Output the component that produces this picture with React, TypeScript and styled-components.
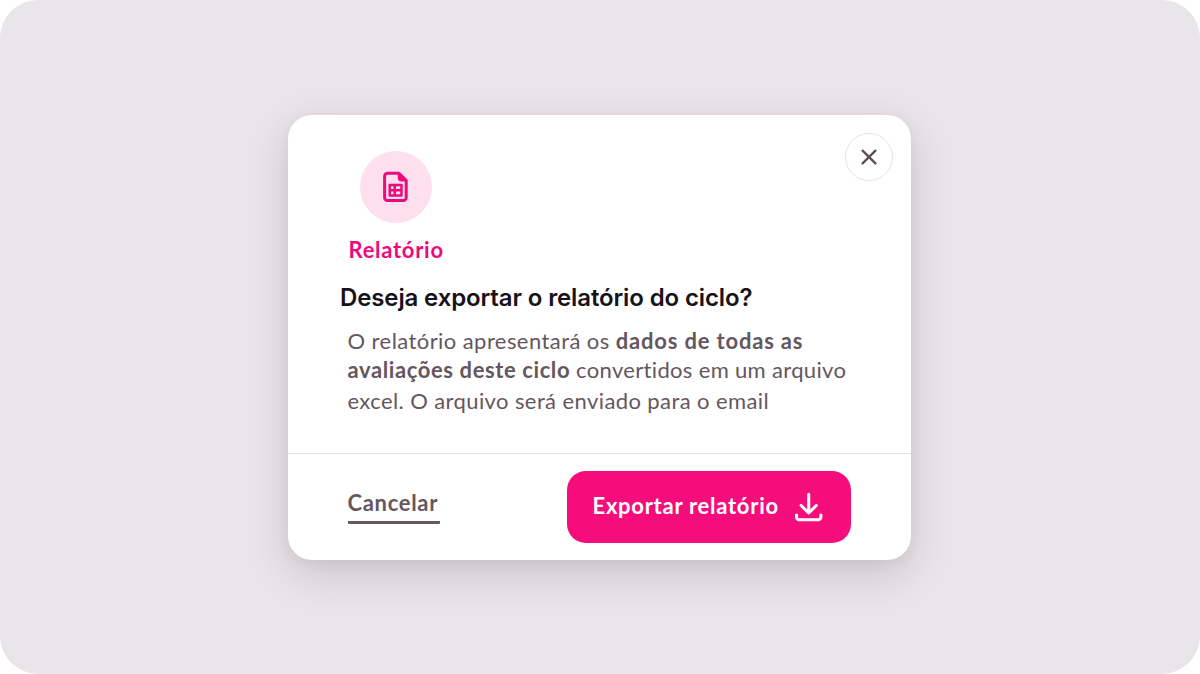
import React from "react";
import styled, { createGlobalStyle } from "styled-components";

const GlobalStyle = createGlobalStyle`
  * { box-sizing: border-box; }
  body { margin: 0; background: #fff; }
  button { font: inherit; border: 0; padding: 0; cursor: pointer; }
`;

const Stage = styled.main`
  width: 1200px;
  height: 674px;
  padding: 114.5px 0 0 287.5px;
  border-radius: 38px;
  background: #eae5e9;
  font-family: Lato, "Open Sans", sans-serif;
  overflow: hidden;
`;

const Dialog = styled.section`
  width: 623.5px;
  height: 445.5px;
  display: flex;
  flex-direction: column;
  border-radius: 24px;
  background: #fff;
  box-shadow: 0 14px 40px rgba(60, 40, 50, 0.17), 0 4px 16px rgba(60, 40, 50, 0.05);
`;

const Body = styled.div`
  height: 339px;
  display: flex;
  justify-content: space-between;
  align-items: flex-start;
  padding: 36px 18px 0 52px;
  border-bottom: 1.5px solid #e6e2e5;
`;

const Content = styled.div`
  flex: 1;
  min-width: 0;
  display: flex;
  flex-direction: column;
  align-items: flex-start;
`;

const Badge = styled.div`
  width: 72px;
  height: 72px;
  margin-left: 20.5px;
  display: grid;
  place-items: center;
  border-radius: 50%;
  background: #fddfee;
`;

const Category = styled.div`
  margin: 12px 0 0 9px;
  font-size: 22px;
  line-height: 30px;
  font-weight: 700;
  letter-spacing: 0.72px;
  color: #ea0b7c;
`;

const Title = styled.h1`
  margin: 18px 0 0 0.5px;
  font-family: Inter, sans-serif;
  font-size: 24px;
  line-height: 30px;
  font-weight: 600;
  letter-spacing: -0.13px;
  color: #18121a;
  white-space: nowrap;
`;

const Message = styled.p`
  margin: 13px 0 0 8px;
  font-size: 22px;
  color: #655660;
`;

const Line = styled.span<{ $height: number; $spacing: number }>`
  display: block;
  height: ${(p) => p.$height}px;
  line-height: 30px;
  letter-spacing: ${(p) => p.$spacing}px;
  white-space: nowrap;
`;

const Strong = styled.strong<{ $spacing: number }>`
  font-weight: 700;
  letter-spacing: ${(p) => p.$spacing}px;
`;

const CloseButton = styled.button`
  flex: none;
  width: 48px;
  height: 48px;
  margin-top: -18px;
  display: grid;
  place-items: center;
  border: 1.5px solid #e6e3e6;
  border-radius: 50%;
  background: #fff;
  color: #5c4e57;
`;

const Footer = styled.footer`
  flex: 1;
  display: flex;
  align-items: flex-start;
  justify-content: space-between;
  padding: 17px 60px 0 60px;
`;

const CancelButton = styled.button`
  width: 92px;
  height: 37px;
  margin-top: 16px;
  padding-bottom: 2px;
  border-bottom: 3px solid #655660;
  border-radius: 1.5px;
  background: none;
  font-size: 22px;
  line-height: 30px;
  font-weight: 700;
  letter-spacing: 0.68px;
  text-align: left;
  color: #655660;
`;

const ExportButton = styled.button`
  width: 284px;
  height: 72px;
  display: flex;
  align-items: center;
  justify-content: space-between;
  padding: 0 27px 0 25.5px;
  border-radius: 19px;
  background: #f50d7b;
  color: #fff;
  font-size: 22px;
  line-height: 30px;
  font-weight: 700;
  letter-spacing: 0.73px;
  white-space: nowrap;
`;

const ExportLabel = styled.span`
  padding-bottom: 1px;
`;

const SheetIcon = () => (
  <svg width="26" height="32" viewBox="0 0 26 32" fill="none" stroke="#ea0b7c" strokeLinejoin="round">
    <path d="M4.600 2.200h11.400l7.200 7.200V26.500a3 3 0 0 1-3 3H4.600a3 3 0 0 1-3-3V5.200a3 3 0 0 1 3-3Z" strokeWidth="3" />
    <path d="M15.600 2.600v4.200a3 3 0 0 0 3 3h4Z" fill="#ea0b7c" strokeWidth="1.600" />
    <path d="M6.700 14h11.800v10.600H6.700ZM11.700 14v10.600M6.700 19.300h11.800" strokeWidth="2.500" />
  </svg>
);

const CloseIcon = () => (
  <svg width="16" height="16" viewBox="0 0 16 16" fill="none" stroke="currentColor" strokeWidth="2.300" strokeLinecap="round">
    <path d="M1.600 1.600 14.400 14.400M14.400 1.600 1.600 14.400" />
  </svg>
);

const DownloadIcon = () => (
  <svg width="30" height="32" viewBox="0 0 30 32" fill="none" stroke="currentColor" strokeWidth="3.100" strokeLinecap="round" strokeLinejoin="round">
    <path d="M14.700 3.400V21.800M7.100 14.500 14.700 22l7.600-7.500M2.500 24.100v2a2.700 2.700 0 0 0 2.700 2.700h19a2.700 2.700 0 0 0 2.700-2.700v-2" />
  </svg>
);

export default function App() {
  return (
    <>
      <GlobalStyle />
      <Stage>
        <Dialog role="dialog" aria-labelledby="dialog-title">
          <Body>
            <Content>
              <Badge><SheetIcon /></Badge>
              <Category>Relatório</Category>
              <Title id="dialog-title">Deseja exportar o relatório do ciclo?</Title>
              <Message>
                <Line $height={29} $spacing={0.43}>
                  O relatório apresentará os <Strong $spacing={0.82}>dados de todas as</Strong>
                </Line>
                <Line $height={31} $spacing={0.33}>
                  <Strong $spacing={0.6}>avaliações deste ciclo</Strong> convertidos em um arquivo
                </Line>
                <Line $height={30} $spacing={0.4}>excel. O arquivo será enviado para o email</Line>
              </Message>
            </Content>
            <CloseButton aria-label="Fechar"><CloseIcon /></CloseButton>
          </Body>
          <Footer>
            <CancelButton>Cancelar</CancelButton>
            <ExportButton><ExportLabel>Exportar relatório</ExportLabel><DownloadIcon /></ExportButton>
          </Footer>
        </Dialog>
      </Stage>
    </>
  );
}
